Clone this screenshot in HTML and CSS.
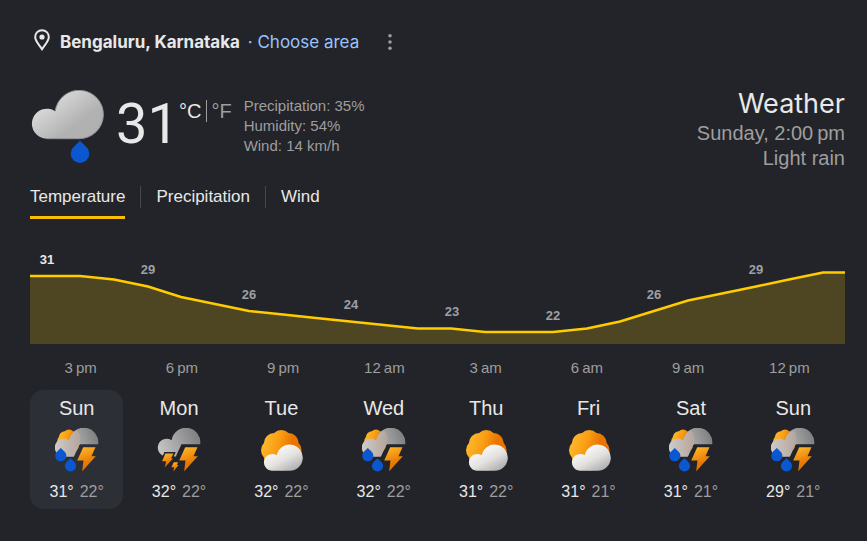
FILE: index.html
```
<!DOCTYPE html>
<html lang="en">

<head>
    <meta charset="utf-8">
    <meta name="viewport" content="width=device-width, initial-scale=1">
    <title>Weather</title>
    <link rel="stylesheet" href="styles.css">
</head>

<body>
    <!-- shared icons -->
    <svg class="sprite" width="0" height="0" aria-hidden="true">
        <defs>
            <linearGradient id="g-cloud" x1="0" y1="0.2" x2="0.8" y2="0.9">
                <stop offset="0" stop-color="#e6e6e6" />
                <stop offset="0.75" stop-color="#b2b2b2" />
                <stop offset="1" stop-color="#b0b0b0" />
            </linearGradient>
            <linearGradient id="g-dark" x1="0" y1="0.6" x2="1" y2="0.3">
                <stop offset="0" stop-color="#c4c4c4" />
                <stop offset="0.5" stop-color="#a0a0a0" />
                <stop offset="1" stop-color="#7c7d7f" />
            </linearGradient>
            <linearGradient id="g-warm" x1="0" y1="0.5" x2="1" y2="0.5">
                <stop offset="0" stop-color="#d0cbc8" />
                <stop offset="1" stop-color="#b3a59b" />
            </linearGradient>
            <linearGradient id="g-white" x1="0.2" y1="0.1" x2="0.9" y2="1">
                <stop offset="0" stop-color="#ffffff" />
                <stop offset="0.5" stop-color="#e4e2e0" />
                <stop offset="1" stop-color="#a3a5a7" />
            </linearGradient>
            <linearGradient id="g-sun" x1="0" y1="0.3" x2="1" y2="0.6">
                <stop offset="0.1" stop-color="#fdb427" />
                <stop offset="0.4" stop-color="#f99d13" />
                <stop offset="0.7" stop-color="#e97400" />
            </linearGradient>
            <linearGradient id="g-bolt" x1="0.3" y1="0" x2="0.6" y2="1">
                <stop offset="0" stop-color="#fdb62b" />
                <stop offset="0.7" stop-color="#e87500" />
            </linearGradient>
            <path id="sun" d="M-7.2-17.4A10.4 10.4 0 0 1 7.2-17.4A10.4 10.4 0 0 1 17.4-7.2A10.4 10.4 0 0 1 17.4 7.2A10.4 10.4 0 0 1 7.2 17.4A10.4 10.4 0 0 1-7.2 17.4A10.4 10.4 0 0 1-17.4 7.2A10.4 10.4 0 0 1-17.4-7.2A10.4 10.4 0 0 1-7.2-17.4Z" />
            <path id="drop" d="M0-7.7L3.9-4A5.6 5.6 0 1 1-3.9-4Z" />
            <path id="bolt" d="M28.2 19.2H40.5L36.5 28.2H40.8L27.2 43.2L28.5 32.5H22.2Z" />
        </defs>
        <symbol id="storm-rain" viewBox="0 0 44 44">
            <use href="#sun" transform="translate(14 13.3) scale(.58)" fill="url(#g-sun)" />
            <path d="M43.2 16.2H24.5L18.8 28.5H9C14 25 12 17 14.3 12.4A14.4 14.4 0 0 1 43.2 16.2Z" fill="url(#g-dark)" />
            <path d="M14.3 12.4A14.4 14.4 0 0 1 21.5 2.4C26.5 6 26.5 13 23 19.5L18.8 28.5H8.9A9 9 0 1 1 14.3 12.4Z" fill="url(#g-warm)" />
            <use href="#drop" x="5.8" y="27.7" fill="#0b57d0" />
            <use href="#drop" x="15.5" y="37.9" fill="#0b57d0" />
            <use href="#bolt" fill="url(#g-bolt)" />
        </symbol>
        <symbol id="storm" viewBox="0 0 44 44">
            <path d="M43.2 16.2H24.5L18.8 28.5H9A8.9 8.9 0 1 1 14.6 12.2A14.4 14.4 0 0 1 43.2 16.2Z" fill="url(#g-dark)" />
            <path class="cut" d="M8.4 25.5H16.4L14.1 30.5H16L7.8 39.2L9.1 33.2H5.1Z" />
            <path d="M8.4 25.5H16.4L14.1 30.5H16L7.8 39.2L9.1 33.2H5.1Z" fill="url(#g-bolt)" />
            <path d="M16.8 34.2H21.1L19.8 37.1H21.6L16.4 43.5L17.1 39.2H14.4Z" fill="url(#g-bolt)" />
            <use href="#bolt" fill="url(#g-bolt)" />
        </symbol>
        <symbol id="partly" viewBox="0 0 44 44">
            <use href="#sun" transform="translate(22.3 22.3)" fill="url(#g-sun)" />
            <path d="M12.7 42.7A8.4 8.4 0 1 1 17.8 27.2A13.1 13.1 0 1 1 30.2 42.7Z" fill="url(#g-white)" />
        </symbol>
    </svg>

    <main class="weather">
        <header class="place">
            <svg class="pin" viewBox="0 0 16 22" aria-hidden="true">
                <path d="M8 1.2C4.2 1.2 1.2 4.1 1.2 8C1.2 12.2 4.6 14.8 8 20.2C11.4 14.8 14.8 12.2 14.8 8C14.8 4.1 11.8 1.2 8 1.2Z" fill="none" stroke="#e8e8e8" stroke-width="2" />
                <circle cx="8" cy="8" r="2.6" fill="#e8e8e8" />
            </svg>
            <p><b>Bengaluru, Karnataka</b> <a href="#">· Choose area</a></p>
            <button class="more" type="button" aria-label="More options">
                <svg viewBox="0 0 4 18">
                    <circle cx="2" cy="2" r="2" />
                    <circle cx="2" cy="9" r="2" />
                    <circle cx="2" cy="16" r="2" />
                </svg>
            </button>
        </header>

        <section class="current">
            <svg class="now" viewBox="0 0 74 74" role="img" aria-label="Light rain">
                <path d="M16.7 48.7A15 15 0 1 1 25.2 21.2A24.2 24.2 0 1 1 49.5 48.7Z" fill="url(#g-cloud)" />
                <path d="M25.2 21.2A24.2 24.2 0 1 1 49.5 48.7H16.7" fill="none" stroke="#8f9398" stroke-width="1" />
                <path d="M50 50.7L56.6 57.2A9.3 9.3 0 1 1 43.4 57.2Z" fill="#0b57d0" />
            </svg>
            <span class="degrees">31</span>
            <div class="units"><span>°C</span><a href="#">°F</a></div>
            <div class="details">
                <div>Precipitation: 35%</div>
                <div>Humidity: 54%</div>
                <div>Wind: 14 km/h</div>
            </div>
            <div class="summary">
                <h1>Weather</h1>
                <div>Sunday, 2:00&#8239;pm</div>
                <div>Light rain</div>
            </div>
        </section>

        <nav class="tabs">
            <button type="button" class="active">Temperature</button>
            <button type="button">Precipitation</button>
            <button type="button">Wind</button>
        </nav>

        <svg class="chart" viewBox="0 0 815 100" role="img" aria-label="Temperature by hour">
            <path class="area" d="M0 31H50L84 34.5L118 41.5L151 52L185 59L219 66L253 69.5L286 73L320 76.5L354 80L388 83.5H421L455 87H523L557 83.5L590 76.5L624 66L658 55.5L692 48.5L726 41.5L759 34.5L793 27.5H815V99H0Z" />
            <path class="line" d="M0 31H50L84 34.5L118 41.5L151 52L185 59L219 66L253 69.5L286 73L320 76.5L354 80L388 83.5H421L455 87H523L557 83.5L590 76.5L624 66L658 55.5L692 48.5L726 41.5L759 34.5L793 27.5H815" />
            <text class="first" x="17" y="19">31</text>
            <text x="118" y="29">29</text>
            <text x="219" y="54">26</text>
            <text x="321" y="64">24</text>
            <text x="422" y="71">23</text>
            <text x="523" y="75">22</text>
            <text x="624" y="54">26</text>
            <text x="726" y="29">29</text>
        </svg>
        <div class="hours">
            <span>3&#8239;pm</span>
            <span>6&#8239;pm</span>
            <span>9&#8239;pm</span>
            <span>12&#8239;am</span>
            <span>3&#8239;am</span>
            <span>6&#8239;am</span>
            <span>9&#8239;am</span>
            <span>12&#8239;pm</span>
        </div>

        <div class="days">
            <button type="button" class="day active">
                <span class="name">Sun</span>
                <svg><use href="#storm-rain" /></svg>
                <span class="range"><span>31°</span><span class="low">22°</span></span>
            </button>
            <button type="button" class="day">
                <span class="name">Mon</span>
                <svg><use href="#storm" /></svg>
                <span class="range"><span>32°</span><span class="low">22°</span></span>
            </button>
            <button type="button" class="day">
                <span class="name">Tue</span>
                <svg><use href="#partly" /></svg>
                <span class="range"><span>32°</span><span class="low">22°</span></span>
            </button>
            <button type="button" class="day">
                <span class="name">Wed</span>
                <svg><use href="#storm-rain" /></svg>
                <span class="range"><span>32°</span><span class="low">22°</span></span>
            </button>
            <button type="button" class="day">
                <span class="name">Thu</span>
                <svg><use href="#partly" /></svg>
                <span class="range"><span>31°</span><span class="low">22°</span></span>
            </button>
            <button type="button" class="day">
                <span class="name">Fri</span>
                <svg><use href="#partly" /></svg>
                <span class="range"><span>31°</span><span class="low">21°</span></span>
            </button>
            <button type="button" class="day">
                <span class="name">Sat</span>
                <svg><use href="#storm-rain" /></svg>
                <span class="range"><span>31°</span><span class="low">21°</span></span>
            </button>
            <button type="button" class="day">
                <span class="name">Sun</span>
                <svg><use href="#storm-rain" /></svg>
                <span class="range"><span>29°</span><span class="low">21°</span></span>
            </button>
        </div>
    </main>
</body>

</html>
```
FILE: styles.css
```
* {
    box-sizing: border-box;
}

body {
    margin: 0;
    background-color: #232429;
    color: #e8e8e8;
    font-family: "Liberation Sans", Arial, sans-serif;
    font-size: 15px;
    line-height: 20px;
}

button {
    border: 0;
    padding: 0;
    background: none;
    color: inherit;
    font: inherit;
    cursor: pointer;
}

a {
    color: #99c3ff;
    text-decoration: none;
}

svg {
    display: block;
}

.sprite {
    position: absolute;
}

.weather {
    padding: 24px 22px 32px 30px;
}

.place {
    display: flex;
    align-items: center;
    height: 36px;
    font-family: Inter, sans-serif;
    font-size: 17px;
}

.place p {
    margin: 0 0 0 10px;
}

.place b {
    margin-right: 3px;
}

.pin {
    width: 16px;
    height: 22px;
    margin: 0 0 4px 4px;
}

.more {
    margin-left: 29px;
}

.more svg {
    width: 4px;
    height: 16px;
    fill: #9e9e9e;
}

.current {
    display: flex;
    align-items: flex-start;
    margin-top: 26px;
}

.now {
    width: 74px;
    height: 74px;
    margin-top: 4px;
}

.degrees {
    margin: 8px 0 0 12px;
    font-family: Roboto, sans-serif;
    font-size: 56px;
    line-height: 60px;
}

.units {
    display: flex;
    margin-top: 14px;
    font-size: 20px;
    line-height: 22px;
}

.units a {
    margin-left: 5px;
    padding-left: 4px;
    border-left: 1px solid #9e9e9e;
    color: #9e9e9e;
}

.details {
    margin: 10px 0 0 12px;
    color: #9e9e9e;
}

.summary {
    margin-left: auto;
    color: #9e9e9e;
    font-size: 20px;
    line-height: 25px;
    text-align: right;
}

.summary h1 {
    margin: 0;
    color: #e8e8e8;
    font-family: Inter, sans-serif;
    font-size: 27px;
    font-weight: 400;
    line-height: 35px;
}

.tabs {
    display: flex;
    align-items: flex-start;
    margin-top: 14px;
    font-size: 17px;
    line-height: 22px;
}

.tabs button {
    padding: 1px 0 8px;
    border-bottom: 3px solid transparent;
}

.tabs .active {
    border-color: #fbbc04;
}

.tabs button + button::before {
    content: "";
    display: inline-block;
    width: 1px;
    height: 22px;
    margin: 0 15px;
    background-color: #47484c;
    vertical-align: top;
}

.chart {
    width: 100%;
    margin-top: 26px;
}

.area {
    fill: #4e4622;
}

.line {
    fill: none;
    stroke: #fc0;
    stroke-width: 2.5;
}

.chart text {
    fill: #9aa0a6;
    font-size: 13px;
    font-weight: bold;
    text-anchor: middle;
}

.chart .first {
    fill: #e8e8e8;
}

.hours {
    display: grid;
    grid-template-columns: repeat(8, 1fr);
    margin-top: 13px;
    padding-right: 5px;
    color: #9e9e9e;
    text-align: center;
}

.days {
    display: grid;
    grid-template-columns: repeat(8, 1fr);
    gap: 9px;
    margin-top: 12px;
    padding-right: 5px;
}

.day {
    display: flex;
    flex-direction: column;
    align-items: center;
    padding: 6px 0 7px;
    border-radius: 14px;
}

.day.active {
    background-color: #2d2f37;
}

.name {
    font-size: 20px;
    line-height: 24px;
}

.day svg {
    width: 44px;
    height: 44px;
    margin: 8px 0 10px;
}

.range {
    display: flex;
    gap: 6px;
    font-size: 16px;
}

.low {
    color: #9e9e9e;
}

.cut {
    fill: #232429;
    stroke: #232429;
    stroke-width: 3;
}
```
